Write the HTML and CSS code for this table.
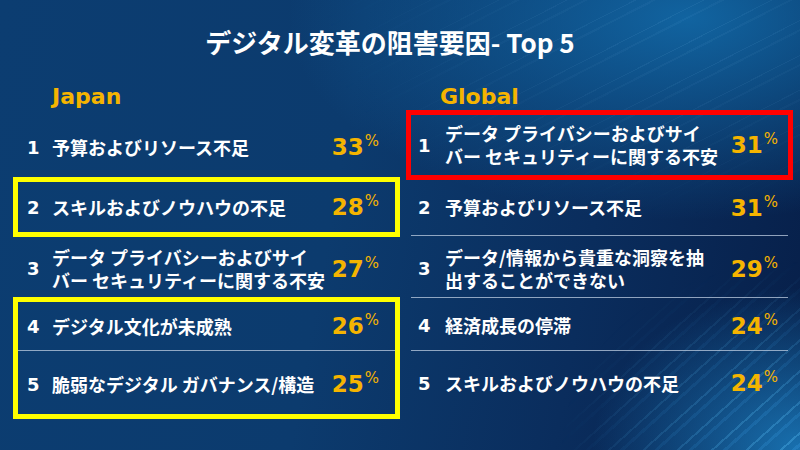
FILE: index.html
```html
<!DOCTYPE html>
<html lang="ja">
<head>
<meta charset="utf-8">
<title>デジタル変革の阻害要因</title>
<link rel="stylesheet" href="styles.css">
</head>
<body>
<div class="slide">
  <h1 class="title">デジタル変革の阻害要因- Top 5</h1>
  <div class="columns">
    <section class="col col-japan">
      <h2 class="region">Japan</h2>
      <div class="list list-japan">
        <div class="group plain">
          <div class="row r-1j"><span class="num">1</span><span class="label">予算およびリソース不足</span><span class="pct">33<sup>%</sup></span></div>
        </div>
        <div class="group yellow">
          <div class="row r-2j"><span class="num">2</span><span class="label">スキルおよびノウハウの不足</span><span class="pct">28<sup>%</sup></span></div>
        </div>
        <div class="group plain">
          <div class="row r-3j"><span class="num">3</span><span class="label">データ プライバシーおよびサイ<br>バー セキュリティーに関する不安</span><span class="pct">27<sup>%</sup></span></div>
        </div>
        <div class="group yellow">
          <div class="row r-4j"><span class="num">4</span><span class="label">デジタル文化が未成熟</span><span class="pct">26<sup>%</sup></span></div>
          <hr class="divider">
          <div class="row r-5j"><span class="num">5</span><span class="label">脆弱なデジタル ガバナンス/構造</span><span class="pct">25<sup>%</sup></span></div>
        </div>
      </div>
    </section>
    <section class="col col-global">
      <h2 class="region">Global</h2>
      <div class="list">
        <div class="group red">
          <div class="row r-1g"><span class="num">1</span><span class="label">データ プライバシーおよびサイ<br>バー セキュリティーに関する不安</span><span class="pct">31<sup>%</sup></span></div>
        </div>
        <div class="group side">
          <div class="row r-2g"><span class="num">2</span><span class="label">予算およびリソース不足</span><span class="pct">31<sup>%</sup></span></div>
          <hr class="divider">
          <div class="row r-3g"><span class="num">3</span><span class="label">データ/情報から貴重な洞察を抽<br>出することができない</span><span class="pct">29<sup>%</sup></span></div>
          <hr class="divider">
          <div class="row r-4g"><span class="num">4</span><span class="label">経済成長の停滞</span><span class="pct">24<sup>%</sup></span></div>
          <hr class="divider">
          <div class="row r-5g"><span class="num">5</span><span class="label">スキルおよびノウハウの不足</span><span class="pct">24<sup>%</sup></span></div>
        </div>
      </div>
    </section>
  </div>
</div>
</body>
</html>
```

FILE: styles.css
```css
html, body {
  margin: 0;
  padding: 0;
}

body {
  width: 800px;
  height: 450px;
  overflow: hidden;
  font-family: "Noto Sans CJK JP", "DejaVu Sans", sans-serif;
  color: #ffffff;
}

.slide {
  position: relative;
  width: 800px;
  height: 450px;
  box-sizing: border-box;
  padding: 25px 7px 0 13px;
  overflow: hidden;
  background:
    radial-gradient(ellipse 50% 45% at 86% 4%, rgba(18, 106, 168, 0.9), rgba(18, 104, 165, 0) 100%),
    radial-gradient(ellipse 26% 36% at 100% 100%, rgba(30, 140, 210, 0.75), rgba(30, 140, 210, 0) 100%),
    linear-gradient(100deg, #0c3d71 0%, #0c3b6e 42%, #0a2d5d 72%, #071f49 100%);
}

.slide::before {
  content: "";
  position: absolute;
  inset: 0;
  background:
    repeating-linear-gradient(153deg, rgba(0, 0, 0, 0) 0 9px, rgba(130, 195, 240, 0.10) 9px 10px, rgba(0, 0, 0, 0) 10px 17px, rgba(130, 195, 240, 0.07) 17px 19px, rgba(0, 0, 0, 0) 19px 31px);
  -webkit-mask-image: radial-gradient(ellipse 45% 40% at 85% 8%, #000 0%, rgba(0, 0, 0, 0) 100%);
  mask-image: radial-gradient(ellipse 45% 40% at 85% 8%, #000 0%, rgba(0, 0, 0, 0) 100%);
  pointer-events: none;
}

.slide::after {
  content: "";
  position: absolute;
  inset: 0;
  background:
    repeating-linear-gradient(138deg, rgba(0, 0, 0, 0) 0 5px, rgba(90, 190, 245, 0.35) 5px 7px, rgba(0, 0, 0, 0) 7px 13px, rgba(60, 160, 230, 0.25) 13px 16px, rgba(0, 0, 0, 0) 16px 23px);
  -webkit-mask-image: radial-gradient(ellipse 30% 42% at 100% 100%, #000 0%, rgba(0, 0, 0, 0) 100%);
  mask-image: radial-gradient(ellipse 30% 42% at 100% 100%, #000 0%, rgba(0, 0, 0, 0) 100%);
  pointer-events: none;
}

.title,
.columns {
  position: relative;
  z-index: 1;
}

.title {
  margin: 0;
  height: 34px;
  line-height: 34px;
  text-align: center;
  font-size: 26px;
  font-weight: 700;
  padding-right: 26px;
}

.columns {
  display: flex;
  gap: 6px;
  margin-top: 25px;
}

.col {
  width: 387px;
  flex: none;
}

.region {
  margin: 0;
  height: 26px;
  line-height: 26px;
  font-family: "DejaVu Sans", sans-serif;
  font-size: 22px;
  font-weight: 700;
  color: #f5b400;
}

.col-japan .region {
  padding-left: 39px;
}

.col-global .region {
  padding-left: 34px;
}

.list-japan {
  margin-top: 7px;
}

.group {
  border: 5px solid transparent;
}

.group.yellow {
  border-color: #ffff00;
}

.group.red {
  border-color: #ff0000;
}

.group.side {
  border-top: 0;
  border-bottom: 0;
}

.row {
  display: flex;
  align-items: center;
  box-sizing: border-box;
}

.col-japan .row {
  padding: 0 16px 0 9px;
}

.col-global .row {
  padding: 0 10px 0 7px;
}

.num {
  flex: none;
  font-family: "DejaVu Sans", sans-serif;
  font-size: 18px;
  font-weight: 700;
}

.col-japan .num {
  width: 25px;
}

.col-global .num {
  width: 27px;
}

.label {
  flex: 1;
  white-space: nowrap;
  font-family: "Noto Sans CJK JP", sans-serif;
  font-size: 18px;
  font-weight: 700;
  line-height: 23px;
}

.pct {
  flex: none;
  font-family: "DejaVu Sans", sans-serif;
  font-size: 23px;
  font-weight: 700;
  color: #f5b400;
  line-height: 26px;
}

.pct sup {
  font-size: 15px;
  font-weight: 400;
  vertical-align: 9px;
  line-height: 0;
  margin-left: 1px;
}

.divider {
  border: 0;
  margin: 0;
  height: 1px;
  background: rgba(190, 205, 225, 0.75);
}

.r-1j { height: 50px; }
.r-2j { height: 50px; }
.r-3j { height: 50px; padding-top: 3px !important; }
.r-4j { height: 48px; }
.r-5j { height: 63px; padding-top: 3px !important; }

.r-1g { height: 60px; }
.r-2g { height: 55px; }
.r-3g { height: 61px; padding-top: 4px !important; }
.r-4g { height: 52px; padding-top: 3px !important; }
.r-5g { height: 61px; padding-top: 3px !important; }
```
